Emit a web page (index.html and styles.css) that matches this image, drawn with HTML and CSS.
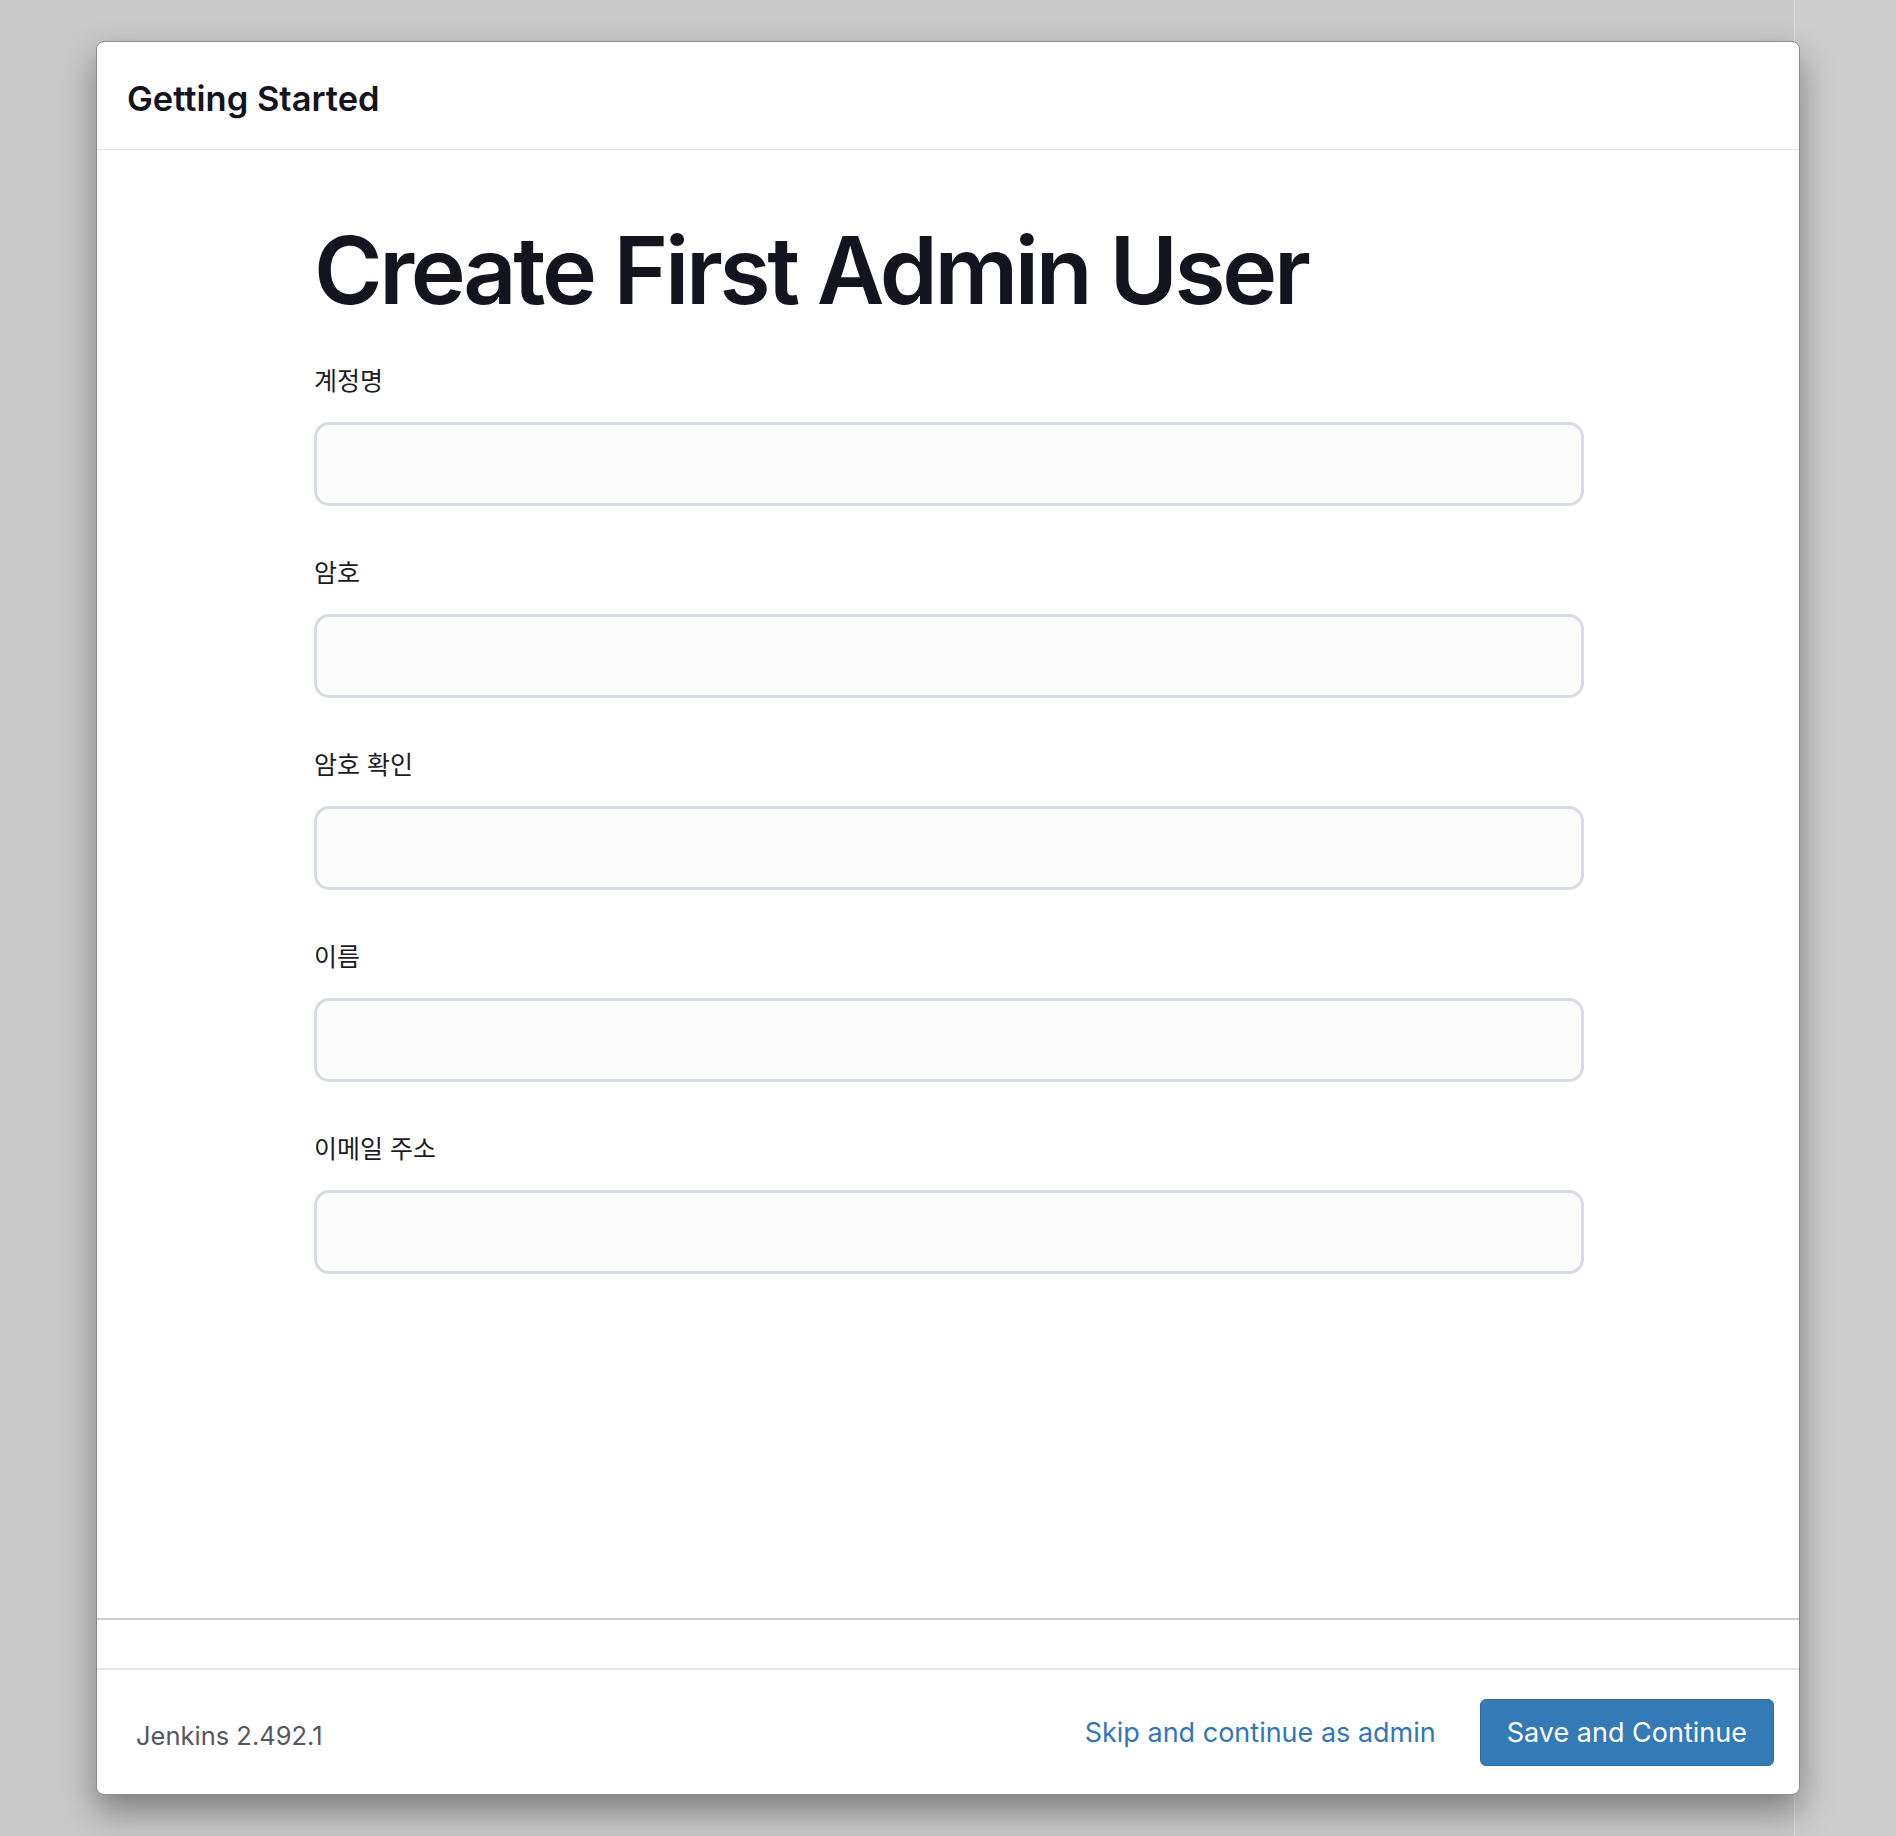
FILE: index.html
```html
<!DOCTYPE html>
<html>
<head>
<meta charset="utf-8">
<title>Getting Started</title>
<link rel="stylesheet" href="styles.css">
</head>
<body>
<div class="backdrop">
  <div class="wizard">
    <div class="wizard-header">
      <h4 class="wizard-title">Getting Started</h4>
    </div>
    <div class="wizard-body">
      <h1 class="page-title">Create First Admin User</h1>
      <form class="admin-form">
        <div class="field">
          <label class="field-label" for="username">계정명</label>
          <input class="field-input" id="username" type="text">
        </div>
        <div class="field">
          <label class="field-label" for="password1">암호</label>
          <input class="field-input" id="password1" type="password">
        </div>
        <div class="field">
          <label class="field-label" for="password2">암호 확인</label>
          <input class="field-input" id="password2" type="password">
        </div>
        <div class="field">
          <label class="field-label" for="fullname">이름</label>
          <input class="field-input" id="fullname" type="text">
        </div>
        <div class="field">
          <label class="field-label" for="email">이메일 주소</label>
          <input class="field-input" id="email" type="text">
        </div>
      </form>
    </div>
    <div class="wizard-gap"></div>
    <div class="wizard-footer">
      <span class="version">Jenkins 2.492.1</span>
      <div class="actions">
        <a class="skip-link" href="#">Skip and continue as admin</a>
        <button class="btn-save" type="button">Save and Continue</button>
      </div>
    </div>
  </div>
</div>
</body>
</html>
```

FILE: styles.css
```css
html, body
{
    margin: 0;
    height: 100%;
    overflow: hidden;
}
body
{
    background: #cdcdcd;
    font-family: "Inter", "Noto Sans CJK KR", sans-serif;
    color: #14141f;
}
.backdrop
{
    width: 1795px;
    height: 100%;
    background: #c9c9c9;
    border-right: 1px solid #dcdcdc;
    padding-top: 41px;
    box-sizing: border-box;
}
.wizard
{
    margin-left: 96px;
    width: 1704px;
    height: 1754px;
    background: #ffffff;
    border: 1px solid #8c8c8c;
    border-radius: 8px;
    box-shadow: 0 16px 34px rgba(0, 0, 0, 0.38);
    box-sizing: border-box;
    display: flex;
    flex-direction: column;
}
.wizard-header
{
    height: 108px;
    border-bottom: 1px solid #e3e3e3;
    padding: 5px 0 0 30px;
    display: flex;
    align-items: center;
    box-sizing: border-box;
}
.wizard-title
{
    margin: 0;
    font-size: 34.5px;
    font-weight: 600;
}
.wizard-body
{
    flex: 1;
    padding: 74px 0 0 217px;
    border-bottom: 2px solid #cfcfcf;
}
.page-title
{
    margin: 0 0 45px;
    font-size: 93px;
    line-height: 93px;
    font-weight: 600;
    letter-spacing: -0.036em;
}
.field
{
    margin-bottom: 48px;
}
.field-label
{
    display: block;
    font-size: 25px;
    line-height: 32px;
    padding-top: 3px;
    margin-bottom: 25px;
    color: #1b1b24;
}
.field-input
{
    display: block;
    width: 1270px;
    height: 84px;
    box-sizing: border-box;
    border: 3px solid #d5dce4;
    border-radius: 15px;
    background: #fcfcfd;
    outline: none;
}
.wizard-gap
{
    height: 48px;
    border-bottom: 2px solid #e6e6e6;
}
.wizard-footer
{
    height: 124px;
    display: flex;
    align-items: center;
    justify-content: space-between;
    padding: 0 25px 0 39px;
}
.version
{
    font-size: 25.5px;
    color: #575760;
    margin-top: 6px;
}
.actions
{
    display: flex;
    align-items: center;
    gap: 44px;
}
.skip-link
{
    font-size: 27px;
    color: #3276b5;
    text-decoration: none;
}
.btn-save
{
    height: 67px;
    padding: 0 26px;
    font-family: inherit;
    font-size: 27px;
    color: #ffffff;
    background: #337ab7;
    border: 1px solid #2e6da4;
    border-radius: 6px;
}
```
